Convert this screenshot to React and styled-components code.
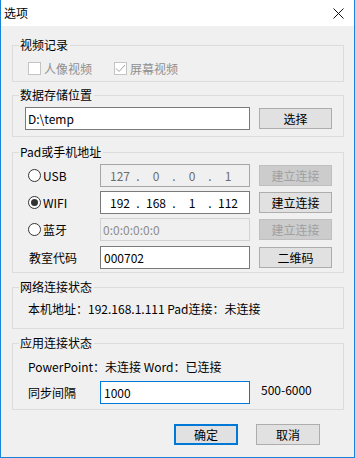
import React from "react";
import styled, { createGlobalStyle, css } from "styled-components";

const GlobalStyle = createGlobalStyle`
  html, body { margin: 0; padding: 0; background: #f0f0f0; }
  body {
    font-family: "Noto Sans CJK SC", "Noto Sans", sans-serif;
    font-size: 12px;
    line-height: 16px;
    color: #000;
  }
  * { box-sizing: border-box; }
`;

const Window = styled.div`
  width: 355px;
  height: 458px;
  background: #f0f0f0;
  border-left: 1px solid #1883d7;
  border-right: 1px solid #1883d7;
  border-bottom: 1px solid #1883d7;
  display: flex;
  flex-direction: column;
`;

const TitleBar = styled.div`
  height: 26px;
  background: #fff;
  display: flex;
  align-items: center;
  justify-content: space-between;
  padding: 0 10px 0 3px;
`;

const TitleText = styled.span`
  font-size: 12px;
  line-height: 16px;
  margin-top: -1px;
`;

const Body = styled.div`
  display: flex;
  flex-direction: column;
  padding: 19px 10px 0 11px;
`;

const Group = styled.div`
  position: relative;
  border: 1px solid #dcdcdc;
  margin-top: ${(p) => p.$gap || 0}px;
  padding: ${(p) => p.$pad};
`;

const GroupLabel = styled.span`
  position: absolute;
  top: -9px;
  left: 6px;
  padding: 0 2px 0 1px;
  background: #f0f0f0;
  line-height: 16px;
  white-space: nowrap;
`;

const CheckRow = styled.div`
  display: flex;
  align-items: center;
  height: 13px;
  gap: 22px;
`;

const CheckItem = styled.label`
  display: flex;
  align-items: center;
  gap: 3px;
  color: #8f8f8f;
  white-space: nowrap;
`;

const CheckBox = styled.span`
  width: 13px;
  height: 13px;
  border: 1px solid #c4c4c4;
  background: #fff;
  display: flex;
  align-items: center;
  justify-content: center;
`;

const Row = styled.div`
  display: flex;
  align-items: center;
  height: 23px;
  margin-top: ${(p) => p.$gap || 0}px;
`;

const LeftCell = styled.div`
  width: ${(p) => p.$w || 72}px;
  display: flex;
  align-items: center;
  gap: 2px;
  padding-left: ${(p) => p.$indent || 0}px;
  white-space: nowrap;
`;

const boxVariants = {
  normal: css`border-color: #7a7a7a; background: #fff; color: #000;`,
  readonly: css`border-color: #a6a6a6; background: #f0f0f0; color: #6d6d6d;`,
  disabled: css`border-color: #d2d2d2; background: #f0f0f0; color: #8c8c8c;`,
  focus: css`border-color: #0078d7; background: #fff; color: #000;`,
};

const TextBox = styled.div`
  width: ${(p) => p.$w}px;
  height: 23px;
  border: 1px solid;
  ${(p) => boxVariants[p.$variant || "normal"]}
  display: flex;
  align-items: center;
  padding-left: ${(p) => p.$padL ?? 2}px;
  white-space: nowrap;
`;

const IpSeg = styled.span`
  width: 28px;
  text-align: center;
`;

const IpDot = styled.span`
  width: 8px;
  text-align: center;
`;

const Button = styled.div`
  width: ${(p) => p.$w || 73}px;
  height: 21px;
  margin-left: ${(p) => p.$ml || 0}px;
  display: flex;
  align-items: center;
  justify-content: center;
  background: #e1e1e1;
  border: 1px solid #adadad;
  color: #000;
  ${(p) =>
    p.$disabled &&
    css`
      background: #cccccc;
      border-color: #bfbfbf;
      color: #a0a0a0;
    `}
  ${(p) =>
    p.$default &&
    css`
      border: 2px solid #0078d7;
    `}
`;

const PlainText = styled.div`
  padding-left: ${(p) => p.$indent || 0}px;
  white-space: nowrap;
  line-height: 16px;
`;

const RangeText = styled.span`
  margin-left: 11px;
  align-self: flex-start;
  margin-top: 1px;
  white-space: nowrap;
`;

const Footer = styled.div`
  display: flex;
  justify-content: flex-end;
  gap: 18px;
  padding-right: 24px;
  margin-top: 14px;
`;

const Radio = ({ checked }) => (
  <svg width="13" height="13" viewBox="0 0 13 13">
    <circle cx="6.5" cy="6.5" r="6" fill="#fff" stroke="#333" strokeWidth="1" />
    {checked && <circle cx="6.5" cy="6.5" r="3.5" fill="#333" />}
  </svg>
);

const Ip = ({ parts }) => (
  <>
    {parts.map((p, i) => (
      <React.Fragment key={i}>
        <IpSeg>{p}</IpSeg>
        {i < parts.length - 1 && <IpDot>.</IpDot>}
      </React.Fragment>
    ))}
  </>
);

export default function App() {
  return (
    <>
      <GlobalStyle />
      <Window>
        <TitleBar>
          <TitleText>选项</TitleText>
          <svg width="11" height="11" viewBox="0 0 11 11">
            <path d="M0.5 0.5 L10.5 10.5 M10.5 0.5 L0.5 10.5" stroke="#111" strokeWidth="1" />
          </svg>
        </TitleBar>
        <Body>
          <Group $pad="16px 0 6px 15px">
            <GroupLabel>视频记录</GroupLabel>
            <CheckRow>
              <CheckItem>
                <CheckBox />
                人像视频
              </CheckItem>
              <CheckItem>
                <CheckBox>
                  <svg width="11" height="11" viewBox="0 0 11 11">
                    <path d="M1 5.5 L4 8.5 L10 2" fill="none" stroke="#a0a0a0" strokeWidth="1" />
                  </svg>
                </CheckBox>
                屏幕视频
              </CheckItem>
            </CheckRow>
          </Group>

          <Group $gap={13} $pad="11px 0 6px 12px">
            <GroupLabel>数据存储位置</GroupLabel>
            <Row>
              <TextBox $w={225}>D:\temp</TextBox>
              <Button $ml={9}>选择</Button>
            </Row>
          </Group>

          <Group $gap={15} $pad="11px 0 3px 15px">
            <GroupLabel>Pad或手机地址</GroupLabel>
            <Row>
              <LeftCell>
                <Radio />
                USB
              </LeftCell>
              <TextBox $w={150} $variant="readonly" $padL={5}>
                <Ip parts={["127", "0", "0", "1"]} />
              </TextBox>
              <Button $ml={9} $disabled>建立连接</Button>
            </Row>
            <Row $gap={4}>
              <LeftCell>
                <Radio checked />
                WIFI
              </LeftCell>
              <TextBox $w={150} $padL={5}>
                <Ip parts={["192", "168", "1", "112"]} />
              </TextBox>
              <Button $ml={9}>建立连接</Button>
            </Row>
            <Row $gap={4}>
              <LeftCell>
                <Radio />
                蓝牙
              </LeftCell>
              <TextBox $w={150} $variant="disabled">0:0:0:0:0:0</TextBox>
              <Button $ml={9} $disabled>建立连接</Button>
            </Row>
            <Row $gap={5}>
              <LeftCell $indent={1}>教室代码</LeftCell>
              <TextBox $w={150} $padL={3}>000702</TextBox>
              <Button $ml={9}>二维码</Button>
            </Row>
          </Group>

          <Group $gap={14} $pad="13px 0 11px 15px">
            <GroupLabel>网络连接状态</GroupLabel>
            <PlainText>本机地址：192.168.1.111 Pad连接：未连接</PlainText>
          </Group>

          <Group $gap={14} $pad="15px 0 5px 15px">
            <GroupLabel>应用连接状态</GroupLabel>
            <PlainText>PowerPoint：未连接 Word：已连接</PlainText>
            <Row $gap={6}>
              <LeftCell>同步间隔</LeftCell>
              <TextBox $w={150} $variant="focus" $padL={3}>1000</TextBox>
              <RangeText>500-6000</RangeText>
            </Row>
          </Group>

          <Footer>
            <Button $w={64} $default>确定</Button>
            <Button $w={64}>取消</Button>
          </Footer>
        </Body>
      </Window>
    </>
  );
}
